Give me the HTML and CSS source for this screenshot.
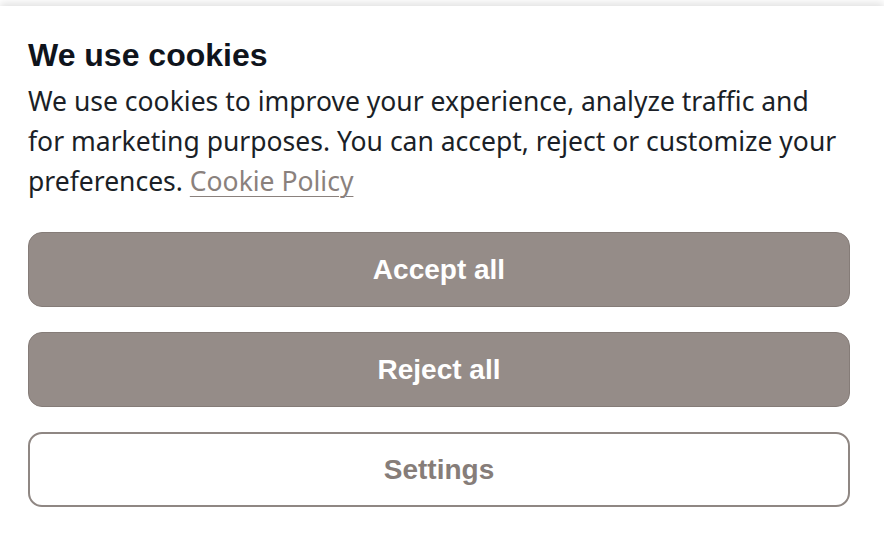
FILE: index.html
```html
<!DOCTYPE html>
<html lang="en">
<head>
    <meta charset="UTF-8">
    <title>Cookie Consent</title>
    <link rel="stylesheet" href="styles.css">
</head>
<body>
    <div class="banner">
        <h2 class="banner-title">We use cookies</h2>
        <p class="banner-text">
            We use cookies to improve your experience, analyze traffic and
            for marketing purposes. You can accept, reject or customize your
            preferences. <a href="#" class="policy-link">Cookie Policy</a>
        </p>
        <div class="actions">
            <button class="btn btn-solid">Accept all</button>
            <button class="btn btn-solid">Reject all</button>
            <button class="btn btn-outline">Settings</button>
        </div>
    </div>
</body>
</html>
```

FILE: styles.css
```css
/* Global Styles */
body {
    margin: 0;
    padding: 0;
    background: #fff;
    overflow: hidden;
}
.banner {
    margin-top: 6px;
    padding: 31px 34px 40px 28px;
    background: #fff;
    box-shadow: 0 -3px 8px rgba(0, 0, 0, 0.12);
    min-height: 540px;
    box-sizing: border-box;
}
.banner-title {
    margin: 0;
    font-family: "Liberation Sans", Arial, sans-serif;
    font-size: 32px;
    font-weight: bold;
    line-height: 36px;
    color: #0f141c;
}
.banner-text {
    max-width: 815px;
    margin: 8px 0 0;
    font-family: "Noto Sans", "Open Sans", sans-serif;
    font-size: 26.5px;
    line-height: 40px;
    color: #1b1f27;
}
.policy-link {
    color: #8a817d;
    text-decoration: underline;
    text-underline-offset: 5px;
    text-decoration-thickness: 1px;
}
.actions {
    display: flex;
    flex-direction: column;
    gap: 25px;
    margin-top: 31px;
}
.btn {
    height: 75px;
    border-radius: 14px;
    font-family: "Liberation Sans", Arial, sans-serif;
    font-size: 28px;
    font-weight: bold;
    cursor: pointer;
    box-sizing: border-box;
}
.btn-solid {
    background: #958c88;
    border: 1.5px solid #857c78;
    color: #fff;
}
.btn-outline {
    background: #fff;
    border: 2px solid #8f8783;
    color: #867d79;
}
```
